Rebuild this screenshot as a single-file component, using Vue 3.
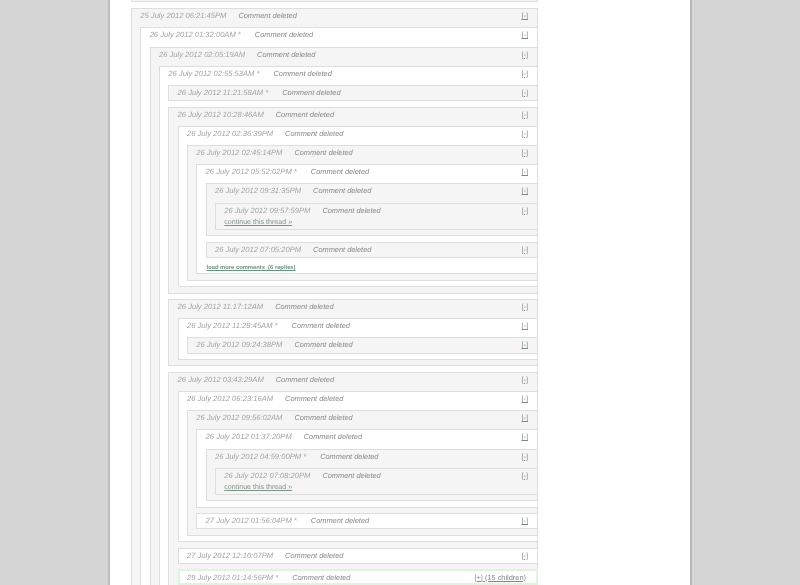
<script setup>
defineProps({
  node: { type: Object, default: null },
  depth: { type: Number, default: 0 }
});

const c = (time, kids = [], extra = {}) => ({ time, kids, ...extra });

const comments = [
  c('25 July 2012 06:21:45PM', [
    c('26 July 2012 01:32:00AM *', [
      c('26 July 2012 02:05:19AM', [
        c('26 July 2012 02:55:53AM *', [
          c('26 July 2012 11:21:58AM *'),
          c('26 July 2012 10:28:46AM', [
            c('26 July 2012 02:36:39PM', [
              c('26 July 2012 02:45:14PM', [
                c('26 July 2012 05:52:02PM *', [
                  c('26 July 2012 09:31:35PM', [
                    c('26 July 2012 09:57:59PM', [], { more: true })
                  ]),
                  c('26 July 2012 07:05:20PM')
                ], { load: true })
              ])
            ])
          ]),
          c('26 July 2012 11:17:12AM', [
            c('26 July 2012 11:28:45AM *', [
              c('26 July 2012 09:24:38PM')
            ])
          ]),
          c('26 July 2012 03:43:29AM', [
            c('26 July 2012 06:23:16AM', [
              c('26 July 2012 09:56:02AM', [
                c('26 July 2012 01:37:20PM', [
                  c('26 July 2012 04:59:00PM *', [
                    c('26 July 2012 07:08:20PM', [], { more: true })
                  ])
                ]),
                c('27 July 2012 01:56:04PM *')
              ])
            ]),
            c('27 July 2012 12:10:07PM'),
            c('29 July 2012 01:14:56PM *', [], { hot: true })
          ])
        ])
      ])
    ])
  ])
];
</script>

<template>
  <div v-if="!node" class="page">
    <div class="column">
      <div class="tree">
        <div class="cut"></div>
        <App v-for="item in comments" :key="item.time" :node="item" :depth="0" />
      </div>
    </div>
  </div>

  <div v-else :class="['comment', { shaded: depth % 2 === 0 || node.more, hot: node.hot }]">
    <div class="row">
      <span class="time">{{ node.time.replace(' *', '') }}<span v-if="node.time.endsWith('*')" class="star"> *</span></span>
      <span class="body">Comment deleted</span>
      <a v-if="node.hot" class="toggle">[+] (15 children)</a>
      <a v-else class="toggle">[-]</a>
    </div>
    <a v-if="node.more" class="more">continue this thread »</a>
    <div v-if="node.kids.length" class="kids">
      <App v-for="kid in node.kids" :key="kid.time" :node="kid" :depth="depth + 1" />
    </div>
    <a v-if="node.load" class="load">load more comments &nbsp;(6 replies)</a>
  </div>
</template>

<style>
html, body {
  margin: 0;
  height: 100%;
  overflow: hidden;
  background: #d6d6d6;
}
</style>

<style scoped>
.page {
  height: 585px;
  overflow: hidden;
  display: flex;
  justify-content: center;
  font-family: "Liberation Sans", Arial, sans-serif;
  text-rendering: geometricPrecision;
}

.column {
  width: 584px;
  height: 585px;
  box-sizing: border-box;
  background: #fff;
  border-left: 2px solid #bcbcbc;
  border-right: 2px solid #b8b8b8;
  padding-left: 21px;
}

.tree {
  width: 407px;
  filter: blur(0.35px);
}

.cut {
  height: 1px;
  background: #f5f5f5;
  border: 1px solid #dedede;
  border-top: 0;
  margin-bottom: 6.2px;
}

.comment {
  border: 1px solid #dedede;
  background: #fff;
  margin-bottom: 5.45px;
}

.shaded {
  background: #f5f5f5;
}

.row {
  display: flex;
  align-items: center;
  box-sizing: border-box;
  height: 14.2px;
  padding: 0 9px 1px 8.3px;
}

.time {
  font-size: 7.6px;
  font-style: italic;
  color: #a3a3a3;
  margin-right: 12px;
  white-space: pre;
}

.star {
  margin-right: 2px;
}

.body {
  font-size: 7.4px;
  font-style: italic;
  color: #8a8a8a;
}

.toggle {
  margin-left: auto;
  font-size: 7.4px;
  color: #7f8a85;
  text-decoration: underline;
}

.more {
  display: block;
  height: 11px;
  line-height: 9px;
  padding-left: 8.3px;
  font-size: 7.1px;
  color: #7f9488;
  text-decoration: underline;
}

.kids {
  margin: 4px -1px 0 0;
  padding-left: 8.33px;
}

.load {
  display: block;
  height: 9px;
  line-height: 9px;
  padding: 1px 0 0 9.3px;
  font-size: 5.8px;
  font-weight: bold;
  color: #6c9180;
  text-decoration: underline;
}

.hot {
  border: 2px solid #dcf5dc;
}

.hot .row {
  height: 11.4px;
  padding: 0 10px 0 7.3px;
}
</style>
